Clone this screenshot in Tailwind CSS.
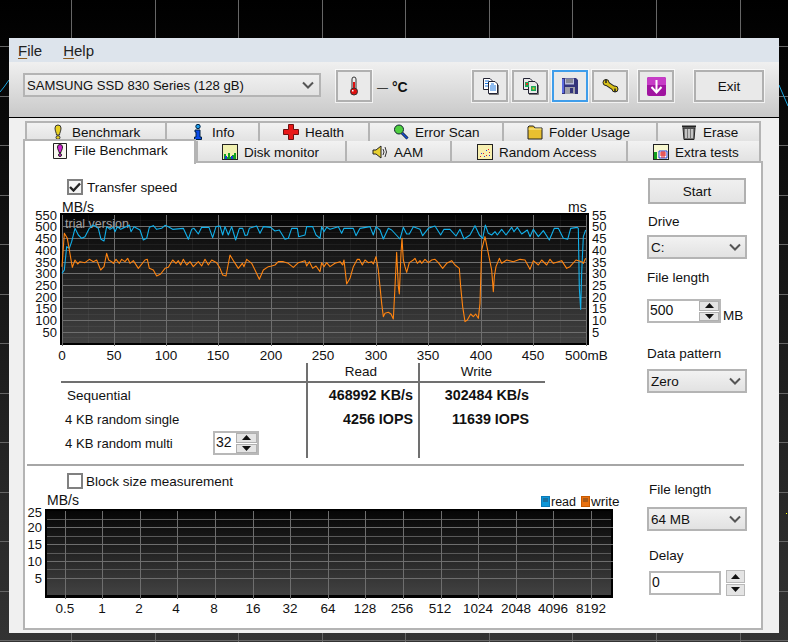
<!DOCTYPE html>
<html>
<head>
<meta charset="utf-8">
<script src="https://cdn.jsdelivr.net/npm/@tailwindcss/browser@4"></script>
</head>
<body class="m-0">
<div class="relative w-[788px] h-[642px] overflow-hidden bg-black font-['Liberation_Sans',Arial,sans-serif] text-[13.5px] leading-[17px] text-[#111]">
  <!-- desktop graph behind the window -->
  <svg class="absolute left-0 top-0" width="788" height="642" viewBox="0 0 788 642">
    <defs><linearGradient id="deskbg" x1="0" y1="0" x2="0" y2="1"><stop offset="0" stop-color="#000"/><stop offset="1" stop-color="#333"/></linearGradient></defs>
    <rect width="788" height="642" fill="url(#deskbg)"/>
    <path d="M71.500 0V642M155.500 0V642M238.500 0V642M322.500 0V642M405.500 0V642M489.500 0V642M572.500 0V642M656.500 0V642M740.500 0V642M0 46.500H788M0 96.500H788M0 145.500H788M0 195.500H788M0 244.500H788M0 294.500H788M0 343.500H788M0 393.500H788M0 442.500H788M0 492.500H788M0 541.500H788M0 591.500H788M0 640.500H788" stroke="#666" fill="none"/>
    <path d="M0 92L4 87L9 80M779 85L788 106" stroke="#16a5e0" fill="none"/>
    <rect x="786" y="513" width="1" height="1" fill="#ff0"/>
  </svg>

  <div class="absolute left-[9px] top-[38px] w-[770px] h-[595px] bg-[#f0f0f0] flex flex-col">
    <!-- menu -->
    <div class="h-[24px] bg-[#dde4ec] flex items-center text-[15px] text-[#222]">
      <span class="ml-[9px]"><span class="underline underline-offset-2 decoration-[#8a5a20]">F</span>ile</span>
      <span class="ml-[21px]"><span class="underline underline-offset-2 decoration-[#8a5a20]">H</span>elp</span>
    </div>
    <!-- toolbar -->
    <div class="h-[56px] border-b border-black bg-gradient-to-b from-[#f0f0f0] to-[#c9c9c9] flex items-start pt-[8px]">
      <div class="ml-[14px] mt-[3px] w-[298px] h-[24px] border-2 border-[#b4b4b4] bg-gradient-to-b from-[#efefef] to-[#e2e2e2] flex items-center justify-between pl-[2px] pr-[5px]">
        <span class="text-[13.1px] whitespace-nowrap">SAMSUNG SSD 830 Series (128 gB)</span>
        <svg width="12" height="8" viewBox="0 0 12 8"><path d="M1 1.500L6 6.500L11 1.500" stroke="#555" stroke-width="2" fill="none"/></svg>
      </div>
      <div class="ml-[15px] w-[36px] h-[32px] border-2 border-[#b0b0b0] outline outline-1 outline-white/70 bg-[#eaeaea] flex items-center justify-center">
        <svg width="12" height="20" viewBox="0 0 12 20"><rect x="4" y="1" width="4" height="13" rx="2" fill="#eee" stroke="#333"/><rect x="5" y="6" width="2" height="9" fill="#e01010"/><circle cx="6" cy="15.500" r="3.500" fill="#e01010" stroke="#333"/><rect x="4" y="14" width="1.500" height="1.500" fill="#fff"/></svg>
      </div>
      <span class="ml-[5px] mt-[9px] w-[30px] flex items-center whitespace-nowrap"><span class="text-[11px]">—</span><span class="ml-[4px] text-[14px] font-bold">°C</span></span>
      <div class="ml-[65px] w-[36px] h-[32px] border-2 border-[#b0b0b0] outline outline-1 outline-white/70 bg-[#e9e9e9] flex items-center justify-center">
        <svg width="17" height="18" viewBox="0 0 17 18"><path d="M1.500 1.500H8L10 3.500V12.500H1.500Z" fill="#fff" stroke="#223"/><path d="M6.500 4.500H13L15.500 7V16.500H6.500Z" fill="#fff" stroke="#223"/><path d="M3 4H7M3 6.500H6M3 9H6M8 9H14M8 11H14M8 13H14M9 7H12" stroke="#1e78e0"/><path d="M7 17.500H16.500V8" stroke="#777" fill="none"/></svg>
      </div>
      <div class="ml-[4px] w-[36px] h-[32px] border-2 border-[#b0b0b0] outline outline-1 outline-white/70 bg-[#e9e9e9] flex items-center justify-center">
        <svg width="17" height="18" viewBox="0 0 17 18"><path d="M1.500 1.500H8L10 3.500V12.500H1.500Z" fill="#e8e8e8" stroke="#223"/><path d="M6.500 4.500H13L15.500 7V16.500H6.500Z" fill="#e8e8e8" stroke="#223"/><rect x="3" y="5" width="4" height="5" fill="#1aa85a"/><rect x="9" y="9" width="5" height="5" fill="#1aa85a"/><rect x="4" y="6" width="2" height="2" fill="#e03020"/><rect x="10.500" y="10.500" width="2" height="2" fill="#e8c020"/><path d="M7 17.500H16.500V8" stroke="#777" fill="none"/></svg>
      </div>
      <div class="ml-[4px] w-[36px] h-[32px] border-2 border-[#3f9dea] outline outline-1 outline-white/70 bg-[#e9e9e9] flex items-center justify-center">
        <svg width="16" height="16" viewBox="0 0 16 16"><path d="M0 0H14L16 2V16H0Z" fill="#33337a"/><rect x="3" y="0.500" width="9" height="6" fill="#b8bcd8"/><path d="M4 2H11M4 4H11" stroke="#555"/><rect x="3" y="9" width="10" height="7" fill="#a0a0a8"/><rect x="8" y="10" width="3" height="5" fill="#33337a"/><path d="M1 1V15" stroke="#5a6ae0" stroke-width="2"/></svg>
      </div>
      <div class="ml-[4px] w-[36px] h-[32px] border-2 border-[#b0b0b0] outline outline-1 outline-white/70 bg-[#e9e9e9] flex items-center justify-center">
        <svg width="17" height="14" viewBox="0 0 17 14"><path d="M4 4L13 10" stroke="#222" stroke-width="5"/><circle cx="4" cy="3.500" r="3" fill="#d8c018" stroke="#222"/><circle cx="13" cy="10" r="3" fill="#d8c018" stroke="#222"/><path d="M4 4L13 10" stroke="#d8c018" stroke-width="3"/><path d="M4 0.500V4M13 9.500V13" stroke="#222" stroke-width="1.500"/></svg>
      </div>
      <div class="ml-[10px] w-[36px] h-[32px] border-2 border-[#b0b0b0] outline outline-1 outline-white/70 bg-[#e9e9e9] flex items-center justify-center">
        <svg width="19" height="19" viewBox="0 0 19 19"><rect width="19" height="19" rx="2" fill="#a014a0"/><path d="M0 2A2 2 0 0 1 2 0H17A2 2 0 0 1 19 2V8H0Z" fill="#c63cc6"/><path d="M9.500 3V15M4.500 10L9.500 15.500L14.500 10" stroke="#fff" stroke-width="2" fill="none"/></svg>
      </div>
      <div class="ml-[20px] w-[70px] h-[32px] border-2 border-[#b0b0b0] outline outline-1 outline-white/70 bg-[#e9e9e9] flex items-center justify-center">Exit</div>
    </div>

    <!-- tabs -->
    <div class="mt-[3px] ml-[16px] flex h-[20px] w-[736px]">
      <div class="w-[140px] h-[20px] border-2 border-r-0 border-b-0 border-[#b4b4b4] bg-gradient-to-b from-[#f2f2f2] to-[#e2e2e2] flex items-center pl-[23px] whitespace-nowrap">
        <svg class="mr-[6px]" width="16" height="16" viewBox="0 0 16 16"><path d="M5 4A3 3 0 0 1 11 4C11 7 9.500 9 9.500 11H6.500C6.500 9 5 7 5 4Z" fill="#e8d020" stroke="#333"/><ellipse cx="8" cy="13.500" rx="2" ry="1.800" fill="#e8d020" stroke="#333"/></svg>Benchmark
      </div>
      <div class="w-[93px] h-[20px] border-2 border-r-0 border-b-0 border-[#b4b4b4] bg-gradient-to-b from-[#f2f2f2] to-[#e2e2e2] flex items-center pl-[23px]">
        <svg class="mr-[6px]" width="16" height="16" viewBox="0 0 16 16"><circle cx="8" cy="2.500" r="2.200" fill="#1e9ce8" stroke="#024"/><path d="M5 6H10V13H11.500V15.500H4.500V13H6V8H5Z" fill="#0a4ae8" stroke="#024"/></svg>Info
      </div>
      <div class="w-[110px] h-[20px] border-2 border-r-0 border-b-0 border-[#b4b4b4] bg-gradient-to-b from-[#f2f2f2] to-[#e2e2e2] flex items-center pl-[23px]">
        <svg class="mr-[6px]" width="16" height="16" viewBox="0 0 16 16"><path d="M5.500 0.500H10.500V5.500H15.500V10.500H10.500V15.500H5.500V10.500H0.500V5.500H5.500Z" fill="#e81818" stroke="#701010"/></svg>Health
      </div>
      <div class="w-[134px] h-[20px] border-2 border-r-0 border-b-0 border-[#b4b4b4] bg-gradient-to-b from-[#f2f2f2] to-[#e2e2e2] flex items-center pl-[23px] whitespace-nowrap">
        <svg class="mr-[6px]" width="16" height="16" viewBox="0 0 16 16"><path d="M9 9L14.500 14.500" stroke="#123" stroke-width="3"/><path d="M9 9L14.500 14.500" stroke="#1a50d8" stroke-width="1.500"/><circle cx="6" cy="5.500" r="4.500" fill="#50d040" stroke="#123"/></svg>Error Scan
      </div>
      <div class="w-[154px] h-[20px] border-2 border-r-0 border-b-0 border-[#b4b4b4] bg-gradient-to-b from-[#f2f2f2] to-[#e2e2e2] flex items-center pl-[23px] whitespace-nowrap">
        <svg class="mr-[6px]" width="16" height="16" viewBox="0 0 16 16"><path d="M1 3V15H15V4H8L6.500 2H2Z" fill="#e8c030" stroke="#222"/><path d="M1.500 5H14.500" stroke="#fff2a0"/></svg>Folder Usage
      </div>
      <div class="w-[105px] h-[20px] border-2 border-b-0 border-[#b4b4b4] bg-gradient-to-b from-[#f2f2f2] to-[#e2e2e2] flex items-center pl-[23px]">
        <svg class="mr-[6px]" width="16" height="16" viewBox="0 0 16 16"><path d="M1 2.500H15" stroke="#222" stroke-width="2"/><path d="M2 4H14L13 15.500H3Z" fill="#777" stroke="#222"/><path d="M5 5V14M8 5V14M11 5V14" stroke="#ddd" stroke-width="1.500"/></svg>Erase
      </div>
    </div>
    <div class="ml-[14px] flex h-[20px] w-[738px] items-start">
      <div class="relative z-10 -mt-[2px] w-[173px] h-[25px] border-2 border-b-0 border-[#b4b4b4] bg-white flex items-start pt-[1px] pl-[27px] whitespace-nowrap">
        <svg class="mr-[6px]" width="16" height="18" viewBox="0 0 16 18"><path d="M1.500 1.500H14.500V16.500H1.500Z" fill="#f8f8f0" stroke="#222"/><path d="M5.500 5A2.500 2.500 0 0 1 10.500 5C10.500 7.500 9 9 9 10.500H7C7 9 5.500 7.500 5.500 5Z" fill="#d020d0" stroke="#222"/><circle cx="8" cy="13" r="1.500" fill="#d020d0" stroke="#222"/></svg><span>File Benchmark</span>
      </div>
      <div class="w-[149px] h-[20px] border-l-2 border-[#b4b4b4] bg-gradient-to-b from-[#f2f2f2] to-[#e2e2e2] flex items-center pt-[2px] pl-[24px] whitespace-nowrap">
        <svg class="mr-[6px]" width="16" height="16" viewBox="0 0 16 16"><rect x="0.500" y="0.500" width="15" height="15" fill="#f0f0b0" stroke="#222"/><path d="M2 15V10H4V13H6V9H8V13H10V11H12V9H14V15Z" fill="#12a020"/><path d="M4 15V12M10 15V12" stroke="#1838d8" stroke-width="2"/></svg>Disk monitor
      </div>
      <div class="w-[105px] h-[20px] border-l-2 border-[#b4b4b4] bg-gradient-to-b from-[#f2f2f2] to-[#e2e2e2] flex items-center pt-[2px] pl-[25px]">
        <svg class="mr-[6px]" width="16" height="16" viewBox="0 0 16 16"><path d="M1 6H4L9 2V14L4 10H1Z" fill="#e8d030" stroke="#222"/><path d="M11 5Q13 8 11 11M13 3Q16 8 13 13" stroke="#333" fill="none"/></svg>AAM
      </div>
      <div class="w-[176px] h-[20px] border-l-2 border-[#b4b4b4] bg-gradient-to-b from-[#f2f2f2] to-[#e2e2e2] flex items-center pt-[2px] pl-[25px] whitespace-nowrap">
        <svg class="mr-[6px]" width="16" height="16" viewBox="0 0 16 16"><rect x="0.500" y="0.500" width="15" height="15" fill="#f8f0b0" stroke="#222"/><path d="M3 12h1v1H3zM6 9h1v1H6zM9 11h1v1H9zM11 5h1v1h-1zM12 8h1v1h-1z" fill="#e02020"/><path d="M4 9h1v1H4zM7 12h1v1H7zM9 6h1v1H9zM12 11h1v1h-1z" fill="#2040e0"/></svg>Random Access
      </div>
      <div class="w-[135px] h-[20px] border-l-2 border-r-2 border-[#b4b4b4] bg-gradient-to-b from-[#f2f2f2] to-[#e2e2e2] flex items-center pt-[2px] pl-[25px] whitespace-nowrap">
        <svg class="mr-[6px]" width="16" height="16" viewBox="0 0 16 16"><rect x="0.500" y="0.500" width="15" height="15" fill="#f8f8d0" stroke="#222"/><rect x="1" y="8" width="3" height="7" fill="#12a020"/><path d="M6 7H14V14H6Z" fill="#fff" stroke="#2040e0"/><path d="M7 9H13M7 11H13M9 7V14M11 7V14" stroke="#e02020"/></svg>Extra tests
      </div>
    </div>

    <!-- panel -->
    <div class="ml-[14px] w-[740px] h-[469px] border-2 border-[#b4b4b4] bg-white flex flex-col">
      <div class="h-[301px] flex shrink-0">
        <div class="w-[605px] flex flex-col">
          <div class="mt-[16px] ml-[42px] flex items-center h-[16px]">
            <div class="w-[16px] h-[16px] border-2 border-[#808080] bg-[#f4f4f4] flex items-center justify-center">
              <svg width="12" height="10" viewBox="0 0 12 10"><path d="M1 5L4.500 8.500L11 1.500" stroke="#222" stroke-width="2.400" fill="none"/></svg>
            </div>
            <span class="ml-[4px]">Transfer speed</span>
          </div>
          <svg class="ml-[5px] mt-[5px] block" width="590" height="163" viewBox="30 200 590 163" font-family="Liberation Sans, Arial, sans-serif" font-size="13" fill="#111">
            <defs><linearGradient id="plotA" x1="0" y1="0" x2="0" y2="1"><stop offset="0" stop-color="#050505"/><stop offset="1" stop-color="#424242"/></linearGradient></defs>
            <rect x="60" y="213" width="529" height="132" fill="#000"/>
            <rect x="62" y="215" width="525" height="128" fill="url(#plotA)"/>
            <path d="M62 220.500H587M62 232.500H587M62 244.500H587M62 256.500H587M62 267.500H587M62 279.500H587M62 291.500H587M62 302.500H587M62 314.500H587M62 326.500H587M62 337.500H587M88.500 215V343M140.500 215V343M192.500 215V343M245.500 215V343M297.500 215V343M350.500 215V343M402.500 215V343M455.500 215V343M507.500 215V343M560.500 215V343" stroke="#ffffff" stroke-opacity="0.050" fill="none"/>
            <path d="M62 226.500H587M62 238.500H587M62 250.500H587M62 262.500H587M62 273.500H587M62 285.500H587M62 297.500H587M62 308.500H587M62 320.500H587M62 332.500H587M62.500 215V346M114.500 215V346M166.500 215V346M218.500 215V346M271.500 215V346M323.500 215V346M376.500 215V346M428.500 215V346M481.500 215V346M533.500 215V346M586.500 215V346" stroke="#6e6e6e" fill="none"/>
            <text x="65" y="228" fill="#a0a0a0" font-size="12.500">trial version</text>
            <g transform="translate(30 170) scale(.33333)" fill="none" stroke-width="3.300" stroke-linejoin="round">
              <polyline stroke="#12b0ea" points="96,310 103,300 110,230 118,235 125,215 135,175 145,195 155,205 165,200 178,175 190,165 205,175 213,208 222,213 230,170 240,178 250,172 255,185 262,170 272,178 285,172 298,165 303,185 312,170 330,180 340,210 350,205 358,172 370,167 380,178 395,175 405,166 415,170 428,178 460,175 475,208 485,178 492,175 505,192 515,172 537,172 548,203 558,170 570,168 578,195 585,170 595,195 605,170 617,210 628,175 638,175 645,196 652,195 658,175 680,168 690,190 700,170 722,172 735,183 748,180 765,208 775,205 785,175 802,175 806,200 825,195 830,170 848,170 858,195 870,205 875,170 882,185 890,172 900,178 925,170 935,190 942,175 970,175 978,197 990,175 1020,170 1030,195 1038,170 1050,180 1060,207 1075,175 1085,180 1110,207 1120,172 1130,192 1138,192 1150,170 1170,178 1178,197 1195,175 1215,168 1232,195 1242,178 1260,178 1278,198 1290,178 1302,207 1320,195 1335,167 1348,195 1358,205 1366,165 1375,190 1385,195 1395,185 1402,195 1415,178 1428,195 1445,172 1452,185 1462,172 1475,192 1492,180 1500,200 1510,178 1525,200 1540,182 1558,210 1573,175 1585,175 1600,205 1613,208 1622,175 1642,172 1645,175 1648,355 1652,418 1655,310 1660,200 1667,180"/>
              <polyline stroke="#ff8410" points="96,290 103,190 112,205 118,240 127,292 135,270 143,282 150,275 165,278 178,268 190,275 200,270 212,300 222,290 230,250 236,270 245,275 250,280 258,268 268,280 275,268 285,275 293,265 300,280 310,272 325,295 345,270 352,268 358,295 370,300 380,318 392,312 405,295 415,292 428,270 438,280 445,272 452,285 460,268 470,285 480,275 490,290 505,275 515,288 525,268 535,285 545,270 560,278 570,295 578,315 588,318 600,255 612,275 625,295 637,280 642,290 650,268 665,280 675,300 688,328 700,300 715,290 725,288 735,285 745,275 760,275 775,280 790,292 805,278 825,272 830,288 838,275 848,295 858,288 870,305 875,278 882,290 890,278 900,290 915,280 930,275 938,285 942,270 950,342 960,325 970,290 982,268 988,268 997,285 1005,270 1015,278 1025,275 1030,282 1038,260 1045,300 1050,350 1055,400 1060,440 1065,430 1075,427 1083,432 1090,447 1095,350 1100,247 1105,350 1108,372 1113,250 1116,205 1120,270 1125,290 1130,307 1138,278 1150,270 1155,265 1162,280 1170,272 1175,280 1185,268 1195,278 1205,270 1215,268 1225,278 1238,295 1250,280 1265,272 1275,285 1288,295 1292,350 1298,410 1305,455 1312,450 1322,432 1330,440 1337,432 1345,445 1350,400 1355,240 1365,200 1375,250 1385,300 1390,365 1393,320 1398,290 1408,265 1415,280 1430,270 1450,275 1470,268 1485,270 1500,298 1510,272 1525,285 1535,270 1550,285 1560,268 1570,280 1595,272 1610,295 1620,290 1638,270 1655,275 1660,280 1667,265"/>
            </g>
            <text x="62" y="212" font-size="14">MB/s</text>
            <text x="568" y="212" font-size="14">ms</text>
            <g text-anchor="end">
              <text x="57" y="220">550</text><text x="57" y="231">500</text><text x="57" y="243">450</text><text x="57" y="255">400</text><text x="57" y="267">350</text><text x="57" y="278">300</text><text x="57" y="290">250</text><text x="57" y="302">200</text><text x="57" y="313">150</text><text x="57" y="325">100</text><text x="57" y="337">50</text>
            </g>
            <g>
              <text x="592" y="220">55</text><text x="592" y="231">50</text><text x="592" y="243">45</text><text x="592" y="255">40</text><text x="592" y="267">35</text><text x="592" y="278">30</text><text x="592" y="290">25</text><text x="592" y="302">20</text><text x="592" y="313">15</text><text x="592" y="325">10</text><text x="592" y="337">5</text>
            </g>
            <g text-anchor="middle" font-size="13.500">
              <text x="62" y="360">0</text><text x="114" y="360">50</text><text x="166" y="360">100</text><text x="218" y="360">150</text><text x="271" y="360">200</text><text x="323" y="360">250</text><text x="376" y="360">300</text><text x="428" y="360">350</text><text x="481" y="360">400</text><text x="533" y="360">450</text>
            </g>
            <text x="565" y="360" font-size="13.500">500mB</text>
          </svg>
          <!-- results table -->
          <div class="ml-[36px] w-[484px] grid grid-cols-[245px_112px_127px] grid-rows-[20px_24px_24px_24px_3px] text-[13.5px] leading-[17px]">
            <div class="border-b-2 border-[#707070]"></div>
            <div class="border-l-2 border-b-2 border-[#707070] text-center pr-[4px]">Read</div>
            <div class="border-l-2 border-b-2 border-[#707070] text-center pr-[12px]">Write</div>
            <div class="pl-[6px] flex items-center">Sequential</div>
            <div class="border-l-2 border-[#707070] flex items-center justify-end pr-[5px] font-bold text-[14.3px] whitespace-nowrap">468992 KB/s</div>
            <div class="border-l-2 border-[#707070] flex items-center justify-end pr-[16px] font-bold text-[14.3px] whitespace-nowrap">302484 KB/s</div>
            <div class="pl-[4px] flex items-center text-[13.1px]">4 KB random single</div>
            <div class="border-l-2 border-[#707070] flex items-center justify-end pr-[5px] font-bold text-[14.3px] whitespace-nowrap">4256 IOPS</div>
            <div class="border-l-2 border-[#707070] flex items-center justify-end pr-[16px] font-bold text-[14.3px] whitespace-nowrap">11639 IOPS</div>
            <div class="pl-[4px] flex items-center justify-between pr-[47px]">
              <span class="whitespace-nowrap text-[13.1px]">4 KB random multi</span>
              <div class="w-[46px] h-[24px] border-2 border-[#b8b8b8] bg-white flex items-center justify-between">
                <span class="ml-[1px] -mt-[2px] text-[14px]">32</span>
                <div class="w-[21px] h-[20px] flex flex-col gap-px">
                  <div class="flex-1 bg-[#e4e4e4] border border-[#b0b0b0] flex items-center justify-center"><svg width="9" height="5" viewBox="0 0 9 5"><path d="M4.500 0L9 5H0Z" fill="#111"/></svg></div>
                  <div class="flex-1 bg-[#e4e4e4] border border-[#b0b0b0] flex items-center justify-center"><svg width="9" height="5" viewBox="0 0 9 5"><path d="M0 0H9L4.500 5Z" fill="#111"/></svg></div>
                </div>
              </div>
            </div>
            <div class="border-l-2 border-[#707070]"></div>
            <div class="border-l-2 border-[#707070]"></div>
            <div></div>
            <div class="border-l-2 border-[#707070]"></div>
            <div class="border-l-2 border-[#707070]"></div>
          </div>
        </div>
        <div class="ml-[17px] w-[100px] flex flex-col">
          <div class="mt-[15px] ml-px w-[98px] h-[26px] border-2 border-[#b0b0b0] bg-gradient-to-b from-[#f0f0f0] to-[#e4e4e4] flex items-center justify-center">Start</div>
          <div class="mt-[9px] ml-px">Drive</div>
          <div class="mt-[5px] w-[100px] h-[24px] border-2 border-[#b4b4b4] bg-gradient-to-b from-[#f2f2f2] to-[#e2e2e2] flex items-center justify-between pl-[2px] pr-[4px]">
            <span>C:</span><svg width="12" height="8" viewBox="0 0 12 8"><path d="M1 1.500L6 6.500L11 1.500" stroke="#555" stroke-width="2" fill="none"/></svg>
          </div>
          <div class="mt-[10px] whitespace-nowrap">File length</div>
          <div class="mt-[13px] flex items-end">
            <div class="w-[74px] h-[24px] border-2 border-[#b8b8b8] bg-white flex items-center justify-between">
              <span class="ml-[1px] -mt-[2px] text-[14px]">500</span>
              <div class="w-[20px] h-[20px] flex flex-col gap-px">
                <div class="flex-1 bg-[#e4e4e4] border border-[#b0b0b0] flex items-center justify-center"><svg width="9" height="5" viewBox="0 0 9 5"><path d="M4.500 0L9 5H0Z" fill="#111"/></svg></div>
                <div class="flex-1 bg-[#e4e4e4] border border-[#b0b0b0] flex items-center justify-center"><svg width="9" height="5" viewBox="0 0 9 5"><path d="M0 0H9L4.500 5Z" fill="#111"/></svg></div>
              </div>
            </div>
            <span class="ml-[2px] -mb-px">MB</span>
          </div>
          <div class="mt-[22px] whitespace-nowrap">Data pattern</div>
          <div class="mt-[7px] w-[100px] h-[24px] border-2 border-[#b4b4b4] bg-gradient-to-b from-[#f2f2f2] to-[#e2e2e2] flex items-center justify-between pl-[2px] pr-[4px]">
            <span>Zero</span><svg width="12" height="8" viewBox="0 0 12 8"><path d="M1 1.500L6 6.500L11 1.500" stroke="#555" stroke-width="2" fill="none"/></svg>
          </div>
        </div>
      </div>

      <div class="ml-[2px] mr-[17px] h-[2px] bg-[#a6a6a6] shrink-0"></div>

      <div class="flex flex-1">
        <div class="w-[605px] flex flex-col">
          <div class="mt-[7px] ml-[42px] flex items-center h-[16px]">
            <div class="w-[16px] h-[16px] border-2 border-[#808080] bg-white"></div>
            <span class="ml-[3px]">Block size measurement</span>
          </div>
          <svg class="mt-[1px] block" width="605" height="130" viewBox="25 490 605 130" font-family="Liberation Sans, Arial, sans-serif" font-size="13.500" fill="#111">
            <defs><linearGradient id="plotB" x1="0" y1="0" x2="0" y2="1"><stop offset="0" stop-color="#050505"/><stop offset="1" stop-color="#424242"/></linearGradient></defs>
            <rect x="45" y="509" width="568" height="89" fill="#000"/>
            <rect x="47" y="511" width="564" height="84" fill="url(#plotB)"/>
            <path d="M47 519.500H611M47 536.500H611M47 553.500H611M47 569.500H611" stroke="#5a5a5a" fill="none"/>
            <path d="M47 527.500H613M47 544.500H613M47 561.500H613M47 578.500H613M65.500 511V599M102.500 511V599M140.500 511V599M177.500 511V599M215.500 511V599M253.500 511V599M290.500 511V599M328.500 511V599M365.500 511V599M403.500 511V599M441.500 511V599M478.500 511V599M516.500 511V599M553.500 511V599M591.500 511V599" stroke="#6e6e6e" fill="none"/>
            <text x="47" y="505" font-size="14">MB/s</text>
            <g text-anchor="end" font-size="13">
              <text x="42" y="517">25</text><text x="42" y="532">20</text><text x="42" y="549">15</text><text x="42" y="566">10</text><text x="42" y="583">5</text>
            </g>
            <g text-anchor="middle">
              <text x="65" y="613">0.5</text><text x="102" y="613">1</text><text x="139" y="613">2</text><text x="176" y="613">4</text><text x="214" y="613">8</text><text x="253" y="613">16</text><text x="290" y="613">32</text><text x="328" y="613">64</text><text x="365" y="613">128</text><text x="402" y="613">256</text><text x="440" y="613">512</text><text x="478" y="613">1024</text><text x="516" y="613">2048</text><text x="553" y="613">4096</text><text x="591" y="613">8192</text>
            </g>
            <rect x="541.500" y="496.500" width="8" height="10" fill="#0c96d8" stroke="#0a7ab8"/><rect x="543" y="498" width="5" height="4" fill="#1a70a0"/>
            <text x="551" y="506" font-size="12.500">read</text>
            <rect x="581.500" y="496.500" width="8" height="10" fill="#e87010" stroke="#c85a00"/><rect x="583" y="498" width="5" height="4" fill="#a85a18"/>
            <text x="591" y="506" font-size="13.500">write</text>
          </svg>
        </div>
        <div class="ml-[17px] w-[100px] flex flex-col">
          <div class="mt-[15px] ml-[2px] whitespace-nowrap">File length</div>
          <div class="mt-[9px] w-[100px] h-[24px] border-2 border-[#b4b4b4] bg-gradient-to-b from-[#f2f2f2] to-[#e2e2e2] flex items-center justify-between pl-[2px] pr-[4px]">
            <span>64 MB</span><svg width="12" height="8" viewBox="0 0 12 8"><path d="M1 1.500L6 6.500L11 1.500" stroke="#555" stroke-width="2" fill="none"/></svg>
          </div>
          <div class="mt-[16px] ml-[2px]">Delay</div>
          <div class="mt-[6px] flex items-center">
            <div class="ml-[2px] w-[72px] h-[24px] border-2 border-[#b8b8b8] bg-white flex items-center"><span class="ml-[1px] -mt-[2px] text-[14px]">0</span></div>
            <div class="ml-[5px] w-[19px] h-[26px] flex flex-col gap-px">
              <div class="flex-1 bg-[#e4e4e4] border border-[#b8b8b8] flex items-center justify-center"><svg width="9" height="5" viewBox="0 0 9 5"><path d="M4.500 0L9 5H0Z" fill="#111"/></svg></div>
              <div class="flex-1 bg-[#e4e4e4] border border-[#b8b8b8] flex items-center justify-center"><svg width="9" height="5" viewBox="0 0 9 5"><path d="M0 0H9L4.500 5Z" fill="#111"/></svg></div>
            </div>
          </div>
        </div>
      </div>
    </div>
  </div>
</div>
</body>
</html>
